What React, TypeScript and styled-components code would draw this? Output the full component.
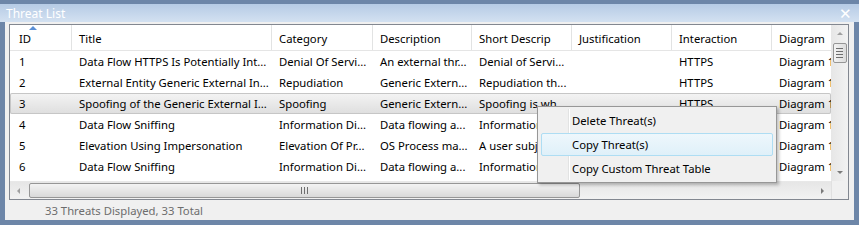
import React from "react";
import styled, { createGlobalStyle } from "styled-components";

const GlobalStyle = createGlobalStyle`
	html, body {
		margin: 0;
		padding: 0;
		background: #6d86a8;
	}
	body {
		font-family: "Noto Sans", "Open Sans", sans-serif;
		font-size: 11.3px;
	}
`;

const Frame = styled.div`
	position: relative;
	width: 859px;
	height: 225px;
	box-sizing: border-box;
	background: #6d86a8;
	padding: 4px 5px 5px 5px;
	display: flex;
	flex-direction: column;
`;

const TitleBar = styled.div`
	height: 18px;
	display: flex;
	align-items: center;
	justify-content: space-between;
	margin: 0 -5px;
	padding: 0 7px 0 6px;
	background: linear-gradient(#b6cbe5, #d3e1f1);
	color: #ffffff;
	font-size: 12px;
`;

const Close = styled.span`
	font-size: 15px;
	line-height: 1;
	color: #ffffff;
`;

const Body = styled.div`
	flex: 1;
	background: #f0f0f0;
	padding: 2px 5px 0 4px;
	display: flex;
	flex-direction: column;
`;

const Grid = styled.div`
	height: 176px;
	box-sizing: border-box;
	border: 1px solid #828790;
	background: #ffffff;
	display: grid;
	grid-template-columns: 1fr 17px;
	grid-template-rows: 1fr 18px;
`;

const Main = styled.div`
	overflow: hidden;
	display: flex;
	flex-direction: column;
`;

const Row = styled.div<{ $selected?: boolean }>`
	display: grid;
	grid-template-columns: 62px 200px 101px 99px 100px 100px 100px 100px;
	height: 21px;
	box-sizing: border-box;
	align-items: center;
	flex-shrink: 0;
	${(p) =>
		p.$selected &&
		`
		background: linear-gradient(#f4f4f4, #dedede);
		box-shadow: inset 0 0 0 1px #c6c6c6;
		border-radius: 2px;
	`}
`;

const HeaderRow = styled(Row)`
	height: 26px;
	border-bottom: 1px solid #e5e5e5;
`;

const HeadCell = styled.div<{ $first?: boolean }>`
	position: relative;
	height: 100%;
	display: flex;
	align-items: center;
	padding-top: 2px;
	box-sizing: border-box;
	padding-left: ${(p) => (p.$first ? "9px" : "7px")};
	border-right: 1px solid #e2e3e3;
	white-space: nowrap;
	overflow: hidden;
	color: #000;
`;

const SortArrow = styled.span`
	position: absolute;
	top: 1px;
	left: 19px;
	width: 0;
	height: 0;
	border-left: 4px solid transparent;
	border-right: 4px solid transparent;
	border-bottom: 4px solid #5b8fd6;
`;

const Cell = styled.div<{ $first?: boolean }>`
	padding-left: ${(p) => (p.$first ? "9px" : "7px")};
	white-space: nowrap;
	overflow: hidden;
	color: #000;
`;

const VScroll = styled.div`
	grid-row: 1;
	grid-column: 2;
	background: linear-gradient(90deg, #e6e6e6, #f2f2f2);
	display: flex;
	flex-direction: column;
	align-items: center;
`;

const HScroll = styled.div`
	grid-row: 2;
	grid-column: 1;
	background: linear-gradient(#e6e6e6, #f2f2f2);
	display: flex;
	align-items: center;
	border-top: 1px solid #e8e8e8;
`;

const Corner = styled.div`
	grid-row: 2;
	grid-column: 2;
	background: #f0f0f0;
	border-left: 1px solid #e0e0e0;
`;

const ArrowBtn = styled.div<{ $dir: "up" | "down" | "left" | "right" }>`
	width: 17px;
	height: 17px;
	flex-shrink: 0;
	display: flex;
	align-items: center;
	justify-content: center;
	&::after {
		content: "";
		width: 0;
		height: 0;
		${(p) =>
			p.$dir === "up"
				? "border-left: 3px solid transparent; border-right: 3px solid transparent; border-bottom: 3px solid #a0a0a0;"
				: p.$dir === "down"
				? "border-left: 3px solid transparent; border-right: 3px solid transparent; border-top: 3px solid #7a7a7a;"
				: p.$dir === "left"
				? "border-top: 3px solid transparent; border-bottom: 3px solid transparent; border-right: 3px solid #a0a0a0;"
				: "border-top: 3px solid transparent; border-bottom: 3px solid transparent; border-left: 3px solid #7a7a7a;"}
	}
`;

const VThumb = styled.div`
	width: 14px;
	height: 20px;
	margin-top: 1px;
	box-sizing: border-box;
	border: 1px solid #969696;
	border-radius: 2px;
	background: linear-gradient(90deg, #f3f3f3, #dcdcdc);
	display: flex;
	flex-direction: column;
	align-items: center;
	justify-content: center;
	gap: 2px;
	span {
		width: 7px;
		height: 1px;
		background: #6e6e6e;
	}
`;

const Spacer = styled.div`
	flex: 1;
`;

const HThumb = styled.div`
	width: 551px;
	height: 15px;
	margin-left: 2px;
	box-sizing: border-box;
	border: 1px solid #969696;
	border-radius: 2px;
	background: linear-gradient(#f3f3f3, #d9d9d9);
	display: flex;
	align-items: center;
	justify-content: center;
	gap: 2px;
	span {
		width: 1px;
		height: 7px;
		background: #6e6e6e;
	}
`;

const Status = styled.div`
	flex: 1;
	display: flex;
	align-items: center;
	padding-left: 36px;
	color: #6d6d6d;
`;

const Menu = styled.div`
	position: absolute;
	left: 537px;
	top: 106px;
	width: 240px;
	height: 77px;
	box-sizing: border-box;
	border: 1px solid #979797;
	background: #f0f0f0;
	box-shadow: 2px 2px 3px rgba(0, 0, 0, 0.25);
	padding: 2px 3px;
	display: flex;
	flex-direction: column;
	&::before {
		content: "";
		position: absolute;
		left: 30px;
		top: 2px;
		bottom: 2px;
		width: 1px;
		background: #e2e3e3;
		box-shadow: 1px 0 0 #ffffff;
	}
`;

const MenuItem = styled.div<{ $hover?: boolean }>`
	position: relative;
	height: 24px;
	box-sizing: border-box;
	display: flex;
	align-items: center;
	padding-left: 30px;
	color: #000;
	border: 1px solid transparent;
	border-radius: 2px;
	${(p) =>
		p.$hover &&
		`
		border-color: #aeddf3;
		background: linear-gradient(#eef7fc, #dff0f9);
	`}
`;

const columns = ["ID", "Title", "Category", "Description", "Short Descrip", "Justification", "Interaction", "Diagram"];

const rows = [
	["1", "Data Flow HTTPS Is Potentially Int...", "Denial Of Servi...", "An external thr...", "Denial of Servi...", "", "HTTPS", "Diagram 1"],
	["2", "External Entity Generic External In...", "Repudiation", "Generic Extern...", "Repudiation th...", "", "HTTPS", "Diagram 1"],
	["3", "Spoofing of the Generic External I...", "Spoofing", "Generic Extern...", "Spoofing is wh...", "", "HTTPS", "Diagram 1"],
	["4", "Data Flow Sniffing", "Information Di...", "Data flowing a...", "Information ...", "", "", "Diagram 1"],
	["5", "Elevation Using Impersonation", "Elevation Of Pr...", "OS Process ma...", "A user subj...", "", "", "Diagram 1"],
	["6", "Data Flow Sniffing", "Information Di...", "Data flowing a...", "Information ...", "", "", "Diagram 1"],
	["7", "Data Flow Sniffing", "Information Di...", "Data flowing a...", "Information ...", "", "", "Diagram 1"],
];

const App: React.FC = () => {
	return (
		<>
			<GlobalStyle />
			<Frame>
				<TitleBar>
					<span>Threat List</span>
					<Close>✕</Close>
				</TitleBar>
				<Body>
					<Grid>
						<Main>
							<HeaderRow>
								{columns.map((c, i) => (
									<HeadCell key={c} $first={i === 0}>
										{i === 0 && <SortArrow />}
										{c}
									</HeadCell>
								))}
							</HeaderRow>
							{rows.map((r) => (
								<Row key={r[0]} $selected={r[0] === "3"}>
									{r.map((v, i) => (
										<Cell key={i} $first={i === 0}>
											{v}
										</Cell>
									))}
								</Row>
							))}
						</Main>
						<VScroll>
							<ArrowBtn $dir="up" />
							<VThumb>
								<span />
								<span />
								<span />
								<span />
							</VThumb>
							<Spacer />
							<ArrowBtn $dir="down" />
						</VScroll>
						<HScroll>
							<ArrowBtn $dir="left" />
							<HThumb>
								<span />
								<span />
								<span />
							</HThumb>
							<Spacer />
							<ArrowBtn $dir="right" />
						</HScroll>
						<Corner />
					</Grid>
					<Status>33 Threats Displayed, 33 Total</Status>
				</Body>
				<Menu>
					<MenuItem>Delete Threat(s)</MenuItem>
					<MenuItem $hover>Copy Threat(s)</MenuItem>
					<MenuItem>Copy Custom Threat Table</MenuItem>
				</Menu>
			</Frame>
		</>
	);
};

export default App;
